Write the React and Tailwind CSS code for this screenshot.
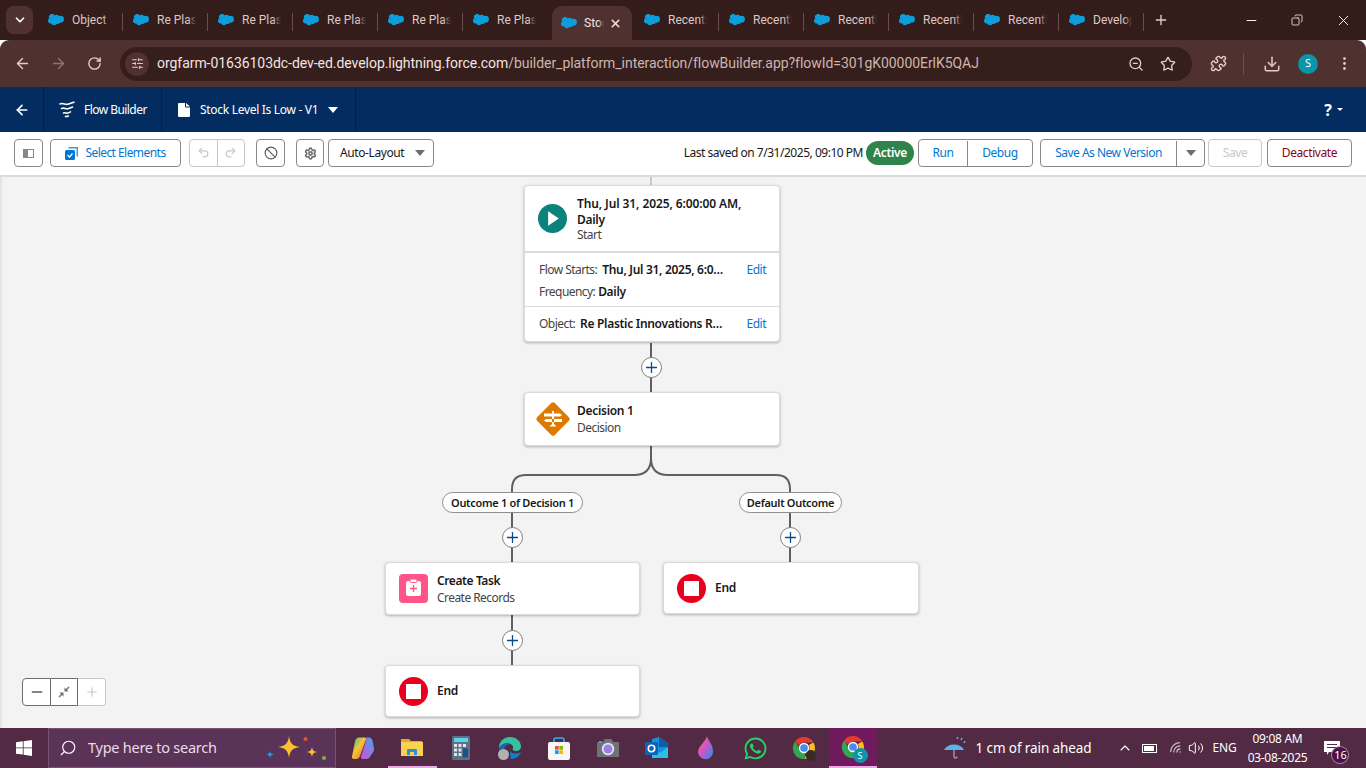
import React from "react";
import {
  ArrowLeft,
  ArrowRight,
  RotateCw,
  Search,
  Star,
  Plus,
  X,
  Minus,
  Undo2,
  Redo2,
  Ban,
  Settings,
  ChevronDown,
  ChevronUp,
  Download,
  Puzzle,
  MoreVertical,
  ZoomOut,
  Copy,
  SlidersHorizontal,
  Volume2,
  Wifi,
} from "lucide-react";
import { FaWhatsapp } from "react-icons/fa";

const ui = "font-['Noto_Sans','Liberation_Sans',sans-serif]";

const Cloud = () => (
  <svg width="16" height="12" viewBox="0 0 16 12" className="shrink-0">
    <path
      fill="#0d9dda"
      d="M6.6 1.6A2.8 2.8 0 0 1 8.7.7c1 0 1.9.6 2.4 1.4a3.3 3.3 0 0 1 1.4-.3 3.4 3.4 0 0 1 0 6.9h-.7a2.5 2.5 0 0 1-3.3 1 2.9 2.9 0 0 1-5.3-.2h-.6a2.6 2.6 0 0 1-1.3-4.9 3 3 0 0 1 5.4-3z"
    />
  </svg>
);

const tabs = [
  "Object Manager",
  "Re Plastic Innovations",
  "Re Plastic Innovations",
  "Re Plastic Innovations",
  "Re Plastic Innovations",
  "Re Plastic Innovations",
];
const tabsAfter = ["Recently Viewed", "Recently Viewed", "Recently Viewed", "Recently Viewed", "Recently Viewed", "Developer"];

const Tab = ({ label, sep }) => (
  <div className="relative flex h-[40px] w-[85px] shrink-0 items-center pl-[10px]">
    <Cloud />
    <div className="relative ml-[8px] w-[39px] overflow-hidden whitespace-nowrap font-['Roboto','Liberation_Sans',sans-serif] text-[12px] text-[#dfc9c5]">
      {label}
      <span className="absolute inset-y-0 right-0 w-[8px] bg-linear-to-r from-transparent to-[#331c1a]" />
    </div>
    {sep && <span className="absolute right-0 top-[13px] h-[18px] w-px bg-[#6b4f4c]" />}
  </div>
);

const ChromeBar = () => (
  <div className={`${ui} shrink-0`}>
    <div className="flex h-[40px] items-center bg-[#331c1a]">
      <div className="ml-[6px] mr-[5px] flex h-[28px] w-[27px] shrink-0 items-center justify-center rounded-lg bg-[#4f3130]">
        <ChevronDown size={14} strokeWidth={3} className="text-white" />
      </div>
      {tabs.map((t, i) => (
        <Tab key={i} label={t} sep={i < 5} />
      ))}
      <div className="ml-[4px] mr-[2px] flex h-[34px] w-[80px] shrink-0 items-center self-end rounded-t-[10px] bg-[#4f3130] pl-[9px]">
        <Cloud />
        <div className="relative ml-[7px] w-[20px] overflow-hidden whitespace-nowrap font-['Roboto','Liberation_Sans',sans-serif] text-[12px] text-[#f2e4e1]">
          Stock Level
          <span className="absolute inset-y-0 right-0 w-[6px] bg-linear-to-r from-transparent to-[#4f3130]" />
        </div>
        <X size={13} strokeWidth={3} className="ml-[5px] text-[#f2e4e1]" />
      </div>
      {tabsAfter.map((t, i) => (
        <Tab key={i} label={t} sep />
      ))}
      <Plus size={16} strokeWidth={2} className="ml-[9px] text-[#e3cdc9]" />
      <div className="ml-auto flex items-center">
        <div className="flex w-[46px] justify-center">
          <Minus size={15} strokeWidth={1.5} className="text-white" />
        </div>
        <div className="flex w-[46px] justify-center">
          <Copy size={12} strokeWidth={1.5} className="-scale-x-100 text-white" />
        </div>
        <div className="flex w-[46px] justify-center">
          <X size={17} strokeWidth={1.3} className="text-white" />
        </div>
      </div>
    </div>
    <div className="flex h-[47px] items-center rounded-t-[9px] bg-[#4f3130]">
      <ArrowLeft size={17} className="ml-[14px] text-[#e3cdc9]" />
      <ArrowRight size={17} className="ml-[19px] text-[#8d7571]" />
      <RotateCw size={15} strokeWidth={2.2} className="ml-[20px] text-[#e3cdc9]" />
      <div className="ml-[18px] flex h-[34px] w-[1072px] items-center rounded-full bg-[#361e1c] pl-[5px]">
        <div className="flex h-[24px] w-[24px] items-center justify-center rounded-full bg-[#4f3130]">
          <SlidersHorizontal size={13} className="text-[#e3cdc9]" />
        </div>
        <span className="ml-[8px] font-['Roboto','Liberation_Sans',sans-serif] text-[14px] tracking-[-0.05px] text-[#f3e4e1]">
          orgfarm-01636103dc-dev-ed.develop.lightning.force.com
          <span className="text-[#cdb5b1]">/builder_platform_interaction/flowBuilder.app?flowId=301gK00000ErlK5QAJ</span>
        </span>
        <ZoomOut size={16} className="ml-auto text-[#e3cdc9]" />
        <Star size={16} strokeWidth={2} className="ml-[16px] mr-[16px] text-[#e3cdc9]" />
      </div>
      <Puzzle size={17} className="ml-[18px] text-[#e3cdc9]" />
      <span className="ml-[16px] h-[22px] w-px bg-[#6b4f4c]" />
      <Download size={18} className="ml-[19px] text-[#e3cdc9]" />
      <div className="ml-[17px] flex h-[20px] w-[20px] items-center justify-center rounded-full bg-[#0b95a8] text-[11px] text-white">
        S
      </div>
      <MoreVertical size={17} className="ml-[18px] text-[#e3cdc9]" />
    </div>
  </div>
);

const FlowLogo = () => (
  <svg width="16" height="17" viewBox="0 0 16 17" fill="none" stroke="#fff" strokeLinecap="round" strokeWidth="1.6">
    <path d="M1 3c3-1.5 5 1 8 .2 2-.5 4-1.4 6-2" />
    <path d="M2.5 7.5c3-1.3 4 .8 6.5.2 1.5-.4 3-1 4.5-1.7" />
    <path d="M4.5 12c2-.8 3 .6 4.5.1 1-.3 1.6-.7 2.5-1.2" />
    <path d="M6.5 15.5c1-.4 2 .2 3-.4" />
  </svg>
);

const NavBar = () => (
  <div className={`${ui} flex h-[45px] shrink-0 items-stretch bg-[#032d60] text-[12px] text-white`}>
    <div className="flex w-[44px] items-center justify-center border-r border-[#02214a]">
      <ArrowLeft size={16} strokeWidth={2.5} />
    </div>
    <div className="flex w-[118px] items-center border-r border-[#02214a] pl-[15px]">
      <FlowLogo />
      <span className="ml-[9px] tracking-[-0.55px]">Flow Builder</span>
    </div>
    <div className="flex w-[194px] items-center border-r border-[#02214a] pl-[16px]">
      <svg width="12" height="14" viewBox="0 0 12 14" fill="#fff">
        <path d="M0 1a1 1 0 0 1 1-1h6v3.5a1 1 0 0 0 1 1h4V13a1 1 0 0 1-1 1H1a1 1 0 0 1-1-1zM8 0l4 3.5H8z" />
      </svg>
      <span className="ml-[10px] tracking-[-0.3px]">Stock Level Is Low - V1</span>
      <span className="ml-[10px] h-0 w-0 border-x-[5px] border-t-[6px] border-x-transparent border-t-white" />
    </div>
    <div className="ml-auto mr-[23px] flex items-center">
      <span className="text-[16px] font-bold">?</span>
      <span className="ml-[5px] h-0 w-0 border-x-[3px] border-t-[3px] border-x-transparent border-t-white" />
    </div>
  </div>
);

const btn = "flex h-[28px] items-center justify-center border border-[#8a8886] bg-white pt-px";

const ToolBar = () => (
  <div className={`${ui} flex h-[45px] shrink-0 items-center border-b-2 border-[#dddbda] bg-white pb-[2px] pl-[14px] pr-[14px] text-[12px] tracking-[-0.4px]`}>
    <div className={`${btn} w-[29px] rounded-[4px]`}>
      <span className="flex h-[9px] w-[11px] border border-[#8a8886]">
        <span className="w-[4px] bg-[#8a8886]" />
      </span>
    </div>
    <div className={`${btn} ml-[7px] w-[131px] rounded-[4px] tracking-[-0.55px] text-[#0176d3]`}>
      <svg width="13" height="13" viewBox="0 0 13 13" className="mr-[7px]">
        <path fill="#0176d3" d="M3.5 0H13v9.5h-1.5V1.5h-8z" opacity=".75" />
        <rect y="3" width="10" height="10" rx="1.5" fill="#0176d3" />
        <path d="M2.5 8l2 2 3-3.5" stroke="#fff" strokeWidth="1.2" fill="none" />
      </svg>
      Select Elements
    </div>
    <div className="ml-[8px] flex h-[28px] w-[56px] rounded-[4px] border border-[#c9c7c5]">
      <div className="flex flex-1 items-center justify-center border-r border-[#c9c7c5]">
        <Undo2 size={13} className="text-[#c9c7c5]" />
      </div>
      <div className="flex flex-1 items-center justify-center">
        <Redo2 size={13} className="text-[#c9c7c5]" />
      </div>
    </div>
    <div className={`${btn} ml-[11px] w-[29px] rounded-[4px]`}>
      <Ban size={14} strokeWidth={2} className="text-[#5c5c5c]" />
    </div>
    <div className={`${btn} ml-[11px] w-[28px] rounded-[4px]`}>
      <Settings size={13} strokeWidth={3} className="text-[#706e6b]" />
    </div>
    <div className={`${btn} ml-[4px] w-[106px] justify-start rounded-[4px] pl-[11px] text-[#181818]`}>
      Auto-Layout
      <span className="ml-auto mr-[8px] h-0 w-0 border-x-[5px] border-t-[6px] border-x-transparent border-t-[#706e6b]" />
    </div>

    <span className="ml-auto pt-px tracking-[-0.48px] text-[#181818]">Last saved on 7/31/2025, 09:10 PM</span>
    <span className="ml-[3px] flex h-[24px] w-[48px] items-center justify-center rounded-full bg-[#2e844a] font-semibold tracking-[-0.3px] text-white">
      Active
    </span>
    <div className={`${btn} ml-[4px] w-[115px] rounded-[4px] text-[#0176d3]`}>
      <span className="flex h-full w-[49px] items-center justify-center border-r border-[#8a8886]">Run</span>
      <span className="flex-1 text-center">Debug</span>
    </div>
    <div className={`${btn} ml-[7px] w-[165px] rounded-[4px] tracking-[-0.5px] text-[#0176d3]`}>
      <span className="flex h-full flex-1 items-center justify-center border-r border-[#8a8886]">Save As New Version</span>
      <span className="flex w-[27px] justify-center">
        <span className="h-0 w-0 border-x-[5px] border-t-[6px] border-x-transparent border-t-[#706e6b]" />
      </span>
    </div>
    <div className="ml-[3px] flex h-[28px] w-[54px] items-center justify-center rounded-[4px] border border-[#c9c7c5] pt-px text-[#c9c7c5]">
      Save
    </div>
    <div className={`${btn} ml-[5px] w-[85px] rounded-[4px] text-[#8e030f]`}>Deactivate</div>
  </div>
);

const card = "absolute rounded-[4px] border border-[#dddbda] bg-white shadow-[0_1px_3px_rgba(0,0,0,0.28)]";
const sub = "tracking-[-0.55px] text-[#444]";

const AddButton = ({ className }) => (
  <div className={`absolute flex h-[21px] w-[21px] items-center justify-center rounded-full border border-[#7e7e7e] bg-white ${className}`}>
    <Plus size={17} strokeWidth={1.8} className="text-[#0b4a8a]" />
  </div>
);

const EndCard = ({ className }) => (
  <div className={`${card} flex items-center pl-[13px] ${className}`}>
    <div className="flex h-[29px] w-[29px] shrink-0 items-center justify-center rounded-full bg-[#ea001e]">
      <span className="h-[15px] w-[15px] bg-white" />
    </div>
    <span className="ml-[9px] font-semibold text-[#181818]">End</span>
  </div>
);

const Connectors = () => (
  <svg className="absolute inset-0" width="1366" height="551" viewBox="0 177 1366 551" fill="none" stroke="#5f5f5f" strokeWidth="2">
    <path d="M651 177V185" stroke="#c9c9c9" />
    <path d="M651 343V392" />
    <path d="M651 445V458C651 469 645 475 634 475H526C517 475 512 480 512 489V492" />
    <path d="M651 445V458C651 469 657 475 668 475H776C785 475 790 480 790 489V492" />
    <path d="M512 513V562" />
    <path d="M790 513V562" />
    <path d="M512 615V665" />
  </svg>
);

const Canvas = () => (
  <div className={`${ui} relative flex-1 overflow-hidden bg-[#f3f3f3] text-[12px] tracking-[-0.3px] text-[#181818]`}>
    <div className="absolute inset-y-0 left-0 w-[2px] bg-[#e4e4e4]" />
    <Connectors />

    {/* start element */}
    <div className={`${card} left-[524px] top-[8px] w-[256px]`}>
      <div className="flex h-[67px] items-start border-b-2 border-[#dddbda] pl-[13px] pt-[10px]">
        <svg width="29" height="29" viewBox="0 0 30 30" className="mt-[8px] shrink-0">
          <circle cx="15" cy="15" r="15" fill="#0b827c" />
          <path d="M10.5 7.5l11 7.5-11 7.5z" fill="#fff" />
        </svg>
        <div className="ml-[10px] leading-[15.5px]">
          <div className="font-semibold tracking-[-0.1px]">Thu, Jul 31, 2025, 6:00:00 AM,</div>
          <div className="font-semibold">Daily</div>
          <div className={sub}>Start</div>
        </div>
      </div>
      <div className="border-b border-[#dddbda] pb-[3px] pl-[14px] pr-[13px] pt-[6px] leading-[22px]">
        <div className="flex">
          <span className={sub}>Flow Starts:</span>
          <span className="ml-[5px] w-[126px] truncate font-semibold">Thu, Jul 31, 2025, 6:00:00 AM</span>
          <span className="ml-auto tracking-[-0.5px] text-[#0176d3]">Edit</span>
        </div>
        <div>
          <span className={sub}>Frequency:</span> <span className="font-semibold">Daily</span>
        </div>
      </div>
      <div className="flex pb-[6px] pl-[14px] pr-[13px] pt-[6px] leading-[22px]">
        <span className={sub}>Object:</span>
        <span className="ml-[5px] w-[149px] truncate font-semibold">Re Plastic Innovations Record</span>
        <span className="ml-auto tracking-[-0.5px] text-[#0176d3]">Edit</span>
      </div>
    </div>

    <AddButton className="left-[641px] top-[180px]" />

    {/* decision */}
    <div className={`${card} left-[524px] top-[215px] flex h-[54px] w-[256px] items-center pl-[10px]`}>
      <svg width="36" height="36" viewBox="0 0 36 36" className="shrink-0">
        <rect x="5.5" y="5.5" width="25" height="25" rx="2.5" fill="#dd7a01" transform="rotate(45 18 18)" />
        <path d="M9 12.5h16l2 1.5-2 1.5H9zM27 18H11l-2 1.5 2 1.5h16zM17 10h2v14h-2zM14.5 25.5l2-2h3l2 2z" fill="#fff" />
      </svg>
      <div className="ml-[6px] leading-[17px]">
        <div className="font-semibold">Decision 1</div>
        <div className={sub}>Decision</div>
      </div>
    </div>

    <div className="absolute left-[442px] top-[315px] flex h-[21px] w-[141px] items-center justify-center rounded-full border border-[#8f8f8f] bg-white pt-px text-[11px] font-semibold">
      Outcome 1 of Decision 1
    </div>
    <div className="absolute left-[739px] top-[315px] flex h-[21px] w-[103px] items-center justify-center rounded-full border border-[#8f8f8f] bg-white pt-px text-[11px] font-semibold">
      Default Outcome
    </div>

    <AddButton className="left-[502px] top-[350px]" />
    <AddButton className="left-[780px] top-[350px]" />

    {/* create task */}
    <div className={`${card} left-[385px] top-[385px] flex h-[53px] w-[255px] items-center pl-[13px]`}>
      <svg width="29" height="29" viewBox="0 0 29 29" className="shrink-0">
        <rect width="29" height="29" rx="4" fill="#ff538a" />
        <path d="M9 7h11a2 2 0 0 1 2 2v11a2 2 0 0 1-2 2H9a2 2 0 0 1-2-2V9a2 2 0 0 1 2-2z" fill="#fff" />
        <rect x="11" y="5" width="7" height="3.5" rx="1.5" fill="#fff" stroke="#ff538a" />
        <path d="M14.5 11v7M11 14.5h7" stroke="#ff538a" strokeWidth="1.3" />
      </svg>
      <div className="ml-[9px] pt-px leading-[17px]">
        <div className="font-semibold tracking-[-0.4px]">Create Task</div>
        <div className={sub}>Create Records</div>
      </div>
    </div>

    <EndCard className="left-[663px] top-[385px] h-[52px] w-[256px]" />
    <AddButton className="left-[502px] top-[453px]" />
    <EndCard className="left-[385px] top-[488px] h-[52px] w-[255px]" />

    {/* zoom controls */}
    <div className="absolute left-[22px] top-[501px] flex h-[28px] w-[84px] rounded-[4px]">
      <div className="flex w-[29px] items-center justify-center rounded-l-[4px] border border-[#706e6b] bg-white">
        <Minus size={16} className="text-[#5c5c5c]" />
      </div>
      <div className="flex w-[27px] items-center justify-center border-y border-r border-[#706e6b] bg-white">
        <svg width="12" height="12" viewBox="0 0 12 12" fill="#706e6b">
          <path d="M5.5 6.5V10.5L4 9 1.5 11.5.5 10.5 3 8 1.5 6.5zM6.5 5.5V1.5L8 3 10.5.5l1 1L9 4l1.5 1.5z" />
        </svg>
      </div>
      <div className="flex w-[28px] items-center justify-center rounded-r-[4px] border-y border-r border-[#c9c7c5] bg-white">
        <Plus size={14} className="text-[#c9c7c5]" />
      </div>
    </div>
  </div>
);

const ChromeIcon = ({ badge }) => (
  <div className="relative h-[24px] w-[24px]">
    <svg width="24" height="24" viewBox="0 0 24 24">
      <path d="M12 1a11 11 0 0 1 9.5 5.5H12a5.5 5.5 0 0 0-5 3.2L3.2 5.2A11 11 0 0 1 12 1z" fill="#e33b2e" />
      <path d="M21.5 6.5A11 11 0 0 1 12 23l4.7-8.2A5.5 5.5 0 0 0 16.7 9z" fill="#fbc116" />
      <path d="M12 23A11 11 0 0 1 3.2 5.2l4.8 8.5a5.5 5.5 0 0 0 5.5 3z" fill="#2fa84f" />
      <circle cx="12" cy="12" r="4.5" fill="#4a8af4" stroke="#fff" strokeWidth="1.3" />
    </svg>
    {badge}
  </div>
);

const apps = [
  // copilot
  <svg key="a" width="24" height="24" viewBox="0 0 24 24">
    <defs>
      <linearGradient id="cp" x1="0" y1="0" x2="1" y2="1">
        <stop offset="0" stopColor="#28b8a8" />
        <stop offset=".45" stopColor="#f7c531" />
        <stop offset="1" stopColor="#f0534f" />
      </linearGradient>
      <linearGradient id="cq" x1="1" y1="0" x2="0" y2="1">
        <stop offset="0" stopColor="#4aa3f0" />
        <stop offset="1" stopColor="#d050d0" />
      </linearGradient>
    </defs>
    <path d="M15 1.5h3c2 0 3 1.5 3.5 3l1.5 8c.3 2-.5 3-1.5 4.5l-2 3c-1 1.7-2 3-4 3h-4c-1.5 0-2-1-1.5-2.5l5-16c.3-1 .5-3 0-3z" fill="url(#cq)" />
    <path d="M8 1.5h6c1 0 1.5.7 1 2L9 20c-.7 2-2 3-3.5 3H3c-1.5 0-2.3-1-2-2.5l3-15c.5-2.5 2-4 4-4z" fill="url(#cp)" />
  </svg>,
  // explorer
  <svg key="b" width="24" height="24" viewBox="0 0 24 24">
    <path d="M1 4h8l2 2h11v3H1z" fill="#e8a820" />
    <path d="M1 7h22v14H1z" fill="#fbd250" />
    <path d="M7 20v-5a1 1 0 0 1 1-1h8a1 1 0 0 1 1 1v5h-3v-3h-4v3z" fill="#2d8fd6" />
  </svg>,
  // calculator
  <svg key="c" width="24" height="24" viewBox="0 0 24 24">
    <rect x="3" y="0" width="18" height="24" rx="1.5" fill="#5d7186" />
    <rect x="5" y="2" width="14" height="4" fill="#5fd3e8" />
    <path d="M5 8h3v3H5zM9.5 8h3v3h-3zM14 8h3v3h-3zM5 12.5h3v3H5zM9.5 12.5h3v3h-3zM5 17h3v3H5zM9.5 17h3v3h-3z" fill="#dfe6ec" />
    <rect x="14" y="12.5" width="5" height="9" fill="#1f4f8a" />
  </svg>,
  // edge
  <div key="d" className="relative h-[24px] w-[24px]">
    <svg width="24" height="24" viewBox="0 0 24 24">
      <path d="M1 12C1 5 6 1 12 1c6.5 0 11 4.5 11 9.5 0 3-2.5 4.5-5 4.5-2 0-3.5-1-3.5-2 1-1 1-3-1-4.5C10 6 4 7 1 12z" fill="#35c1a0" />
      <path d="M1 12c3-5 9-6 12.5-3.5-5-1-7.5 2.5-7.5 6 0 4 3 7 7 8-6.5.5-12-4-12-10.5z" fill="#1569b8" />
      <path d="M13 23c5 0 8.5-3 10-7-3 2-9 2.5-11-1 0 4 1 7 1 8z" fill="#0f7fd0" />
    </svg>
    <span className="absolute bottom-0 left-0 h-[11px] w-[11px] rounded-full bg-[#b5b0b0]" />
  </div>,
  // store
  <svg key="e" width="24" height="24" viewBox="0 0 24 24">
    <path d="M7 7V3.5A2 2 0 0 1 9 2h6a2 2 0 0 1 2 1.5V7" fill="none" stroke="#2cb5f0" strokeWidth="1.5" />
    <rect x="1" y="6" width="22" height="18" rx="2" fill="#f7f7f7" />
    <path d="M8 10h3.7v3.7H8z" fill="#f25022" />
    <path d="M12.3 10H16v3.7h-3.7z" fill="#7fba00" />
    <path d="M8 14.3h3.7V18H8z" fill="#00a4ef" />
    <path d="M12.3 14.3H16V18h-3.7z" fill="#ffb900" />
  </svg>,
  // camera
  <svg key="f" width="24" height="24" viewBox="0 0 24 24">
    <path d="M1 7a1 1 0 0 1 1-1h5l1.5-3h7L17 6h5a1 1 0 0 1 1 1v14H1z" fill="#6f7378" />
    <circle cx="12" cy="13" r="6.2" fill="#e8e8ee" />
    <circle cx="12" cy="13" r="4.5" fill="#a07ee8" />
    <rect x="3" y="5" width="3" height="2" fill="#3aa0e8" />
  </svg>,
  // outlook
  <svg key="g" width="24" height="24" viewBox="0 0 24 24">
    <path d="M7 3l7-2 9 6v14H7z" fill="#1490df" />
    <path d="M14 1l9 6v4H14z" fill="#0a5ea8" />
    <path d="M7 13l8 4 8-6v11H7z" fill="#28c2e8" />
    <rect x="0" y="6" width="13" height="13" rx="1" fill="#0f62b5" />
    <circle cx="6.5" cy="12.5" r="3.2" fill="none" stroke="#fff" strokeWidth="1.6" />
  </svg>,
  // drop
  <svg key="h" width="24" height="24" viewBox="0 0 24 24">
    <defs>
      <linearGradient id="dr" x1="0" y1="0" x2="1" y2="1">
        <stop offset="0" stopColor="#f08a3a" />
        <stop offset=".45" stopColor="#d552c8" />
        <stop offset="1" stopColor="#2a8fe8" />
      </linearGradient>
    </defs>
    <path d="M13 0c0 3 6 8 6 15a7.5 7.5 0 0 1-15 1.5C4 10 11 7 13 0z" fill="url(#dr)" />
  </svg>,
  <FaWhatsapp key="i" size={25} className="text-[#25d366]" />,
  <div key="j" className="relative">
    <ChromeIcon />
    <span className="absolute -bottom-px right-0 h-[11px] w-[10px] rounded-full bg-[#3a2a2a]" />
  </div>,
];

const TaskBar = () => (
  <div className="flex h-[40px] shrink-0 items-stretch bg-[#532a43] font-['Noto_Sans','Liberation_Sans',sans-serif] text-white">
    <div className="flex w-[48px] items-center justify-center">
      <svg width="16" height="16" viewBox="0 0 16 16" fill="#fff">
        <path d="M0 2.3l6.8-1V7.5H0zM7.6 1.2L16 0v7.5H7.6zM0 8.3h6.8v6.3L0 13.7zM7.6 8.3H16V16l-8.4-1.2z" />
      </svg>
    </div>
    <div className="relative flex w-[288px] items-center border border-[#7a5272] bg-[#5c3358] pl-[10px]">
      <Search size={18} strokeWidth={1.5} className="-scale-x-100 text-white" />
      <span className="ml-[11px] text-[14.5px] tracking-[-0.25px] text-[#e8dce6]">Type here to search</span>
      <svg className="absolute left-[216px] top-[6px]" width="64" height="28" viewBox="0 0 64 28">
        <path d="M24 1c1 7 3 10 11 11-8 1-10 4-11 11-1-7-3-10-11-11 8-1 10-4 11-11z" fill="#fbc02d" />
        <path d="M47 12c.5 3 1.5 4.5 5.5 5-4 .5-5 2-5.5 5-.5-3-1.5-4.5-5.5-5 4-.5 5-2 5.500-5z" fill="#fbc02d" />
        <path d="M5 16c.3 2 1 3 4 3.5-3 .5-3.7 1.5-4 3.5-.3-2-1-3-4-3.5 3-.5 3.7-1.5 4-3.500z" fill="#1e9de0" />
        <circle cx="40.5" cy="4" r="2" fill="#e0582a" />
        <circle cx="59" cy="23" r="2" fill="#7cb342" />
      </svg>
    </div>
    <div className="ml-[2.5px] flex items-stretch">
      {apps.map((icon, i) => (
        <div key={i} className={`relative flex w-[49px] items-center justify-center ${i === 1 ? "border-b-2 border-[#eeaae8]" : ""}`}>
          {icon}
        </div>
      ))}
      <div className="flex w-[48px] items-center justify-center border-b-2 border-[#eeaae8] bg-[#701a5e]">
        <ChromeIcon
          badge={
            <span className="absolute -bottom-[4px] -right-[3px] flex h-[15px] w-[15px] items-center justify-center rounded-full bg-[#0b95a8] text-[9px]">
              S
            </span>
          }
        />
      </div>
    </div>
    <div className="ml-[66px] flex items-center">
      <svg width="24" height="24" viewBox="0 0 24 24">
        <path d="M1 14a11 9.5 0 0 1 20 0z" fill="#5ab4ea" />
        <path d="M11 14v6.5a1.5 1.5 0 0 0 3 0" fill="none" stroke="#9a9a9a" strokeWidth="1.4" />
        <path d="M15 1l-1 2M19 2l-1 2M22 5l-1 2" stroke="#5ab4ea" strokeWidth="1.5" />
      </svg>
      <span className="ml-[9px] text-[13.5px] tracking-[-0.1px]">1 cm of rain ahead</span>
    </div>
    <div className="ml-[25px] flex items-center">
      <ChevronUp size={16} strokeWidth={1.6} />
      <span className="relative ml-[9px] flex h-[9px] w-[15px] items-center border border-white p-px">
        <span className="h-full w-[10px] bg-white" />
      </span>
      <Wifi size={15} className="ml-[12px] -rotate-45 text-[#c9b8c4]" />
      <Volume2 size={16} strokeWidth={1.5} className="ml-[4px]" />
      <span className="ml-[9px] text-[12px] tracking-[-0.2px]">ENG</span>
    </div>
    <div className="ml-[12px] flex w-[58px] flex-col items-center justify-center whitespace-nowrap text-[12px] leading-[19px] tracking-[-0.3px]">
      <span>09:08 AM</span>
      <span>03-08-2025</span>
    </div>
    <div className="relative ml-[18px] flex items-center">
      <svg width="16" height="14" viewBox="0 0 16 14">
        <path d="M0 0h16v11H5l-2 3v-3H0z" fill="#fff" />
        <path d="M3 3.5h10M3 6.5h10" stroke="#532a43" />
      </svg>
      <span className="absolute left-[7px] top-[18px] flex h-[18px] w-[18px] items-center justify-center rounded-full border border-white/50 bg-[#4a1048] text-[11px]">
        16
      </span>
    </div>
  </div>
);

export default function App() {
  return (
    <div className="flex h-[768px] w-[1366px] flex-col overflow-hidden">
      <ChromeBar />
      <NavBar />
      <ToolBar />
      <Canvas />
      <TaskBar />
    </div>
  );
}
